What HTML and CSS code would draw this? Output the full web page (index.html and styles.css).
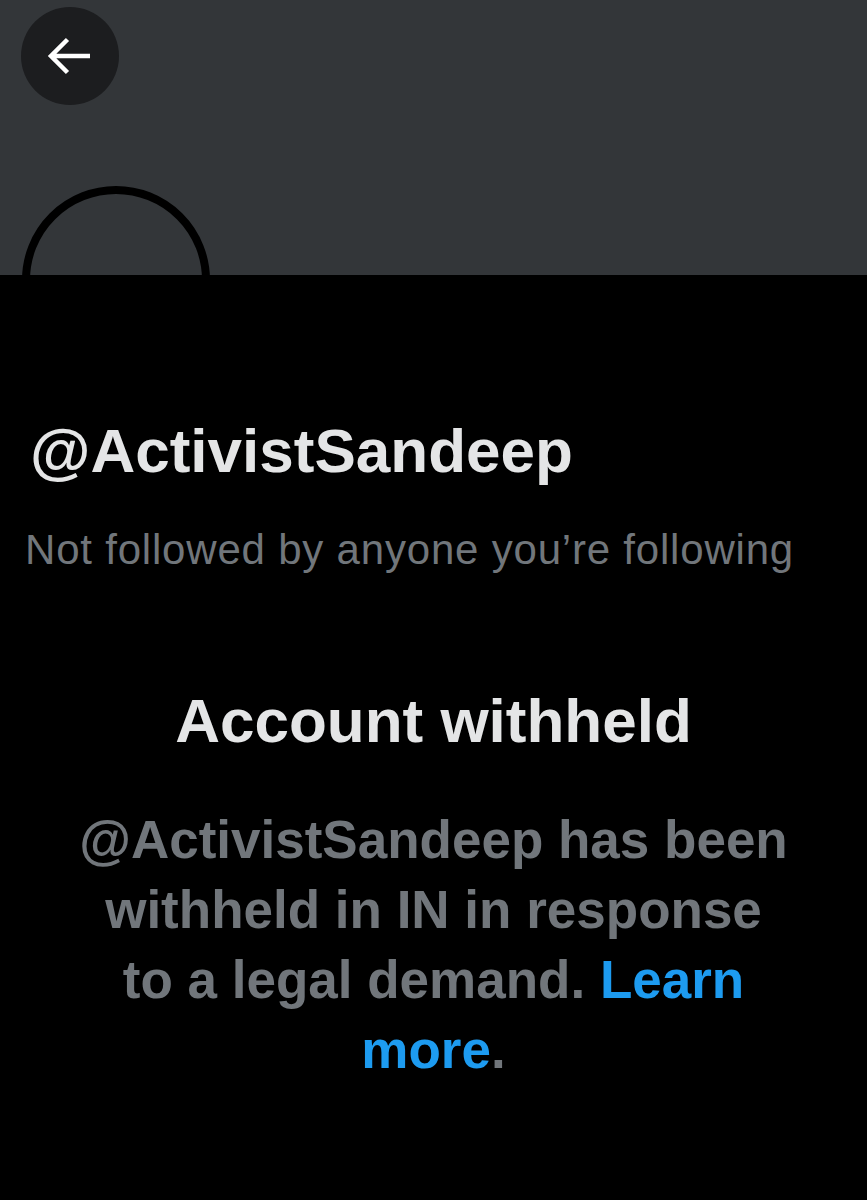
FILE: index.html
```html
<!DOCTYPE html>
<html>
<head>
<meta charset="utf-8">
<link rel="stylesheet" href="styles.css">
</head>
<body>
<div class="page">
  <header class="banner">
    <button class="back" aria-label="Back">
      <svg width="45" height="38" viewBox="0 0 45 38"><path d="M3 19H43M20.5 2.5L4 19L20.5 35.5" fill="none" stroke="#fff" stroke-width="4.5"/></svg>
    </button>
    <div class="avatar"></div>
  </header>
  <main class="content">
    <h1 class="handle">@ActivistSandeep</h1>
    <p class="followers">Not followed by anyone you’re following</p>
    <section class="notice">
      <h2 class="notice-title">Account withheld</h2>
      <p class="notice-text">@ActivistSandeep has been withheld in IN in response to a legal demand. <a class="link" href="#">Learn more</a>.</p>
    </section>
  </main>
</div>
</body>
</html>
```
FILE: styles.css
```css
html, body {
  margin: 0;
  padding: 0;
  background: #000;
}
body {
  font-family: "Liberation Sans", Arial, sans-serif;
  width: 867px;
  height: 1200px;
  overflow: hidden;
}
.page {
  background: #000;
  min-height: 1200px;
}
.banner {
  position: relative;
  height: 275px;
  background: #333639;
  padding: 7px 0 0 21px;
  box-sizing: border-box;
}
.back {
  width: 98px;
  height: 98px;
  border-radius: 50%;
  border: none;
  background: #1c1d1f;
  display: flex;
  align-items: center;
  justify-content: center;
  padding: 0 2px 0 0;
}
.avatar {
  position: absolute;
  left: 22px;
  top: 186px;
  width: 188px;
  height: 188px;
  box-sizing: border-box;
  border: 8px solid #000;
  border-radius: 50%;
}
.content {
  padding: 0 0 0 30px;
}
.handle {
  margin: 140px 0 0 0;
  font-size: 62px;
  font-weight: 700;
  color: #e4e5e6;
  letter-spacing: 0;
  line-height: 72px;
}
.followers {
  margin: 39px 0 0 -5px;
  font-size: 42px;
  font-weight: 400;
  color: #71767b;
  letter-spacing: 0.8px;
  line-height: 48px;
}
.notice {
  margin: 111px 0 0 -30px;
  text-align: center;
}
.notice-title {
  margin: 0;
  font-size: 62px;
  font-weight: 700;
  color: #e4e5e6;
  line-height: 72px;
}
.notice-text {
  width: 714px;
  margin: 48px auto 0;
  font-size: 53px;
  font-weight: 700;
  color: #71767b;
  line-height: 70px;
}
.link {
  color: #1d9bf0;
  text-decoration: none;
}
```
